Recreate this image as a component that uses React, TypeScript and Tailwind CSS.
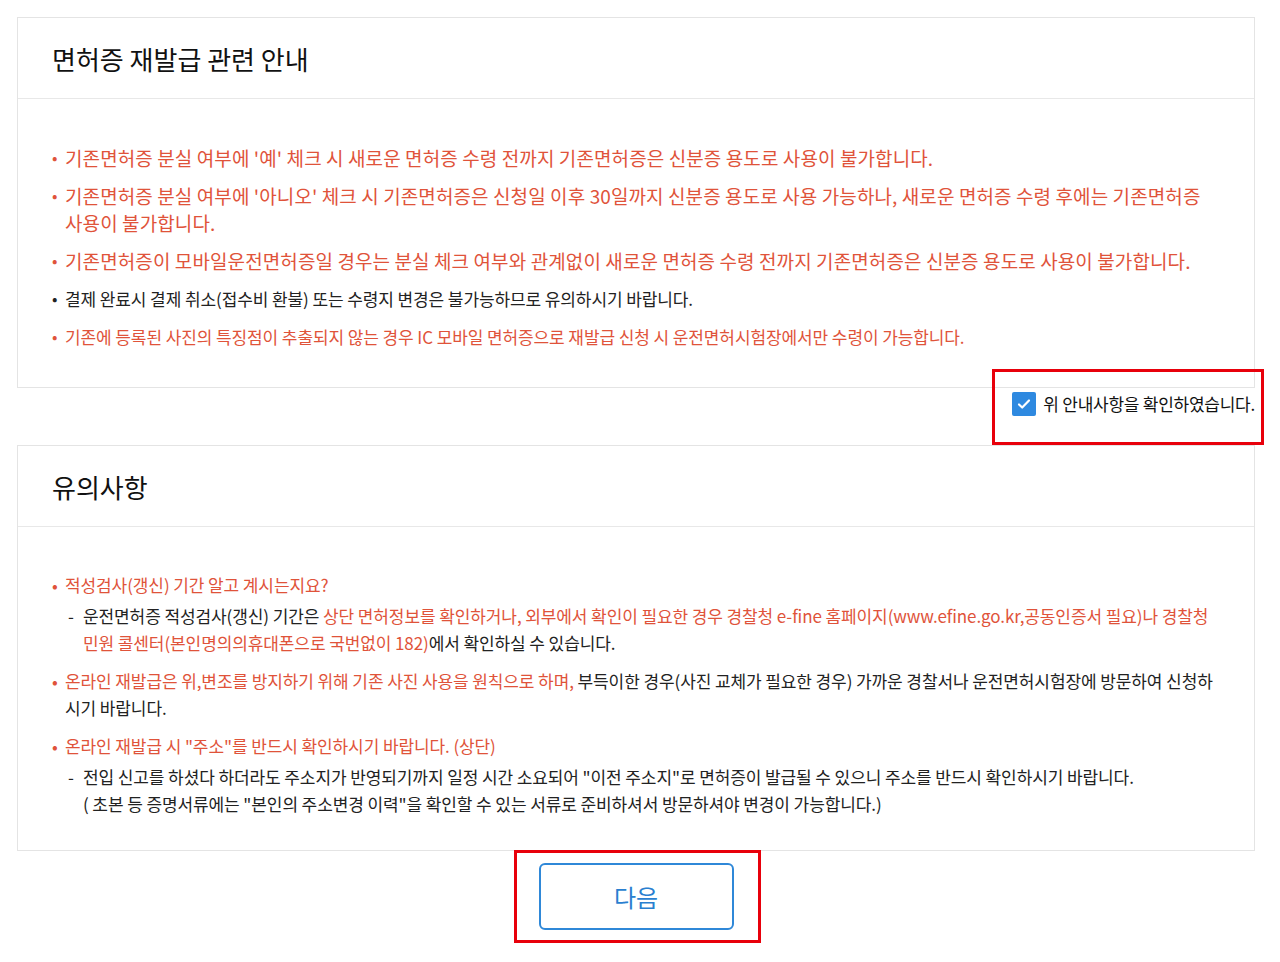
import React from 'react';

const RED = 'text-[#e0533a]';

function Bullet({ red = true, children }: { red?: boolean; children: React.ReactNode }) {
    return (
        <li className="flex">
            <span className={`w-[13px] shrink-0 ${red ? RED : 'text-[#222]'}`}>•</span>
            <div className="flex-1">{children}</div>
        </li>
    );
}

function Dash({ children }: { children: React.ReactNode }) {
    return (
        <div className="flex pl-[3px] mt-[4px] text-[#222]">
            <span className="w-[15px] shrink-0">-</span>
            <div className="flex-1">{children}</div>
        </div>
    );
}

export default function App() {
    return (
        <div
            className="min-h-screen bg-white pl-[17px] pr-[25px] pt-[17px]"
            style={{ fontFamily: '"Noto Sans CJK KR", "Noto Sans", sans-serif' }}
        >
            {/* 면허증 재발급 관련 안내 */}
            <section className="border border-[#e4e4e4] bg-white">
                <div className="h-[81px] flex items-center px-[34px] border-b border-[#e8e8e8]">
                    <h2 className="text-[26px] text-[#111]">면허증 재발급 관련 안내</h2>
                </div>
                <ul className="pl-[34px] pr-[38px] pt-[45px] pb-[37px] flex flex-col gap-[11px] leading-[27px]">
                    <Bullet>
                        <p className={`text-[19px] tracking-[0.1px] ${RED}`}>
                            기존면허증 분실 여부에 '예' 체크 시 새로운 면허증 수령 전까지 기존면허증은 신분증 용도로 사용이 불가합니다.
                        </p>
                    </Bullet>
                    <Bullet>
                        <p className={`text-[19px] tracking-[0.1px] ${RED}`}>
                            기존면허증 분실 여부에 '아니오' 체크 시 기존면허증은 신청일 이후 30일까지 신분증 용도로 사용 가능하나, 새로운 면허증 수령 후에는 기존면허증 사용이 불가합니다.
                        </p>
                    </Bullet>
                    <Bullet>
                        <p className={`text-[19px] tracking-[0.1px] ${RED}`}>
                            기존면허증이 모바일운전면허증일 경우는 분실 체크 여부와 관계없이 새로운 면허증 수령 전까지 기존면허증은 신분증 용도로 사용이 불가합니다.
                        </p>
                    </Bullet>
                    <Bullet red={false}>
                        <p className="text-[17px] tracking-[-0.1px] text-[#222]">
                            결제 완료시 결제 취소(접수비 환불) 또는 수령지 변경은 불가능하므로 유의하시기 바랍니다.
                        </p>
                    </Bullet>
                    <Bullet>
                        <p className={`text-[17px] tracking-[-0.1px] ${RED}`}>
                            기존에 등록된 사진의 특징점이 추출되지 않는 경우 IC 모바일 면허증으로 재발급 신청 시 운전면허시험장에서만 수령이 가능합니다.
                        </p>
                    </Bullet>
                </ul>
            </section>

            {/* 확인 체크 */}
            <div className="h-[57px] flex justify-end items-start pt-[3px]">
                <label className="relative flex items-center gap-[7px] cursor-pointer">
                    <span className="w-[24px] h-[24px] rounded-[2px] bg-[#2e89e0] flex items-center justify-center">
                        <svg width="16" height="16" viewBox="0 0 16 16" fill="none">
                            <path d="M3 8.5l3.2 3L13 4.5" stroke="white" strokeWidth="2.2" strokeLinecap="round" strokeLinejoin="round" />
                        </svg>
                    </span>
                    <span className="text-[17px] tracking-[-0.25px] text-[#111]">위 안내사항을 확인하였습니다.</span>
                    <span className="pointer-events-none absolute -left-[20px] -right-[9px] -top-[22px] -bottom-[28px] border-[3px] border-[#e8000b]" />
                </label>
            </div>

            {/* 유의사항 */}
            <section className="border border-[#e4e4e4] bg-white">
                <div className="h-[81px] flex items-center px-[34px] border-b border-[#e8e8e8]">
                    <h2 className="text-[26px] text-[#111]">유의사항</h2>
                </div>
                <ul className="pl-[34px] pr-[38px] pt-[44px] pb-[33px] flex flex-col gap-[11px] leading-[27px] text-[17px] tracking-[-0.1px]">
                    <Bullet>
                        <p className={RED}>적성검사(갱신) 기간 알고 계시는지요?</p>
                        <Dash>
                            운전면허증 적성검사(갱신) 기간은{' '}
                            <span className={RED}>
                                상단 면허정보를 확인하거나, 외부에서 확인이 필요한 경우 경찰청 e-fine 홈페이지(www.efine.go.kr,공동인증서 필요)나 경찰청 민원 콜센터(본인명의의휴대폰으로 국번없이 182)
                            </span>
                            에서 확인하실 수 있습니다.
                        </Dash>
                    </Bullet>
                    <Bullet>
                        <p className="text-[#222]">
                            <span className={RED}>온라인 재발급은 위,변조를 방지하기 위해 기존 사진 사용을 원칙으로 하며,</span> 부득이한 경우(사진 교체가 필요한 경우) 가까운 경찰서나 운전면허시험장에 방문하여 신청하시기 바랍니다.
                        </p>
                    </Bullet>
                    <Bullet>
                        <p className={RED}>온라인 재발급 시 "주소"를 반드시 확인하시기 바랍니다. (상단)</p>
                        <Dash>
                            전입 신고를 하셨다 하더라도 주소지가 반영되기까지 일정 시간 소요되어 "이전 주소지"로 면허증이 발급될 수 있으니 주소를 반드시 확인하시기 바랍니다.
                            <br />( 초본 등 증명서류에는 "본인의 주소변경 이력"을 확인할 수 있는 서류로 준비하셔서 방문하셔야 변경이 가능합니다.)
                        </Dash>
                    </Bullet>
                </ul>
            </section>

            {/* 다음 버튼 */}
            <div className="flex justify-center pt-[12px] pb-[20px]">
                <div className="relative">
                    <button
                        type="button"
                        className="w-[195px] h-[67px] rounded-[6px] border-2 border-[#2f88d8] bg-white text-[24px] text-[#2a7fd0] hover:bg-blue-50"
                    >
                        다음
                    </button>
                    <span className="pointer-events-none absolute -left-[25px] -right-[27px] -top-[13px] -bottom-[13px] border-[3px] border-[#e8000b]" />
                </div>
            </div>
        </div>
    );
}
